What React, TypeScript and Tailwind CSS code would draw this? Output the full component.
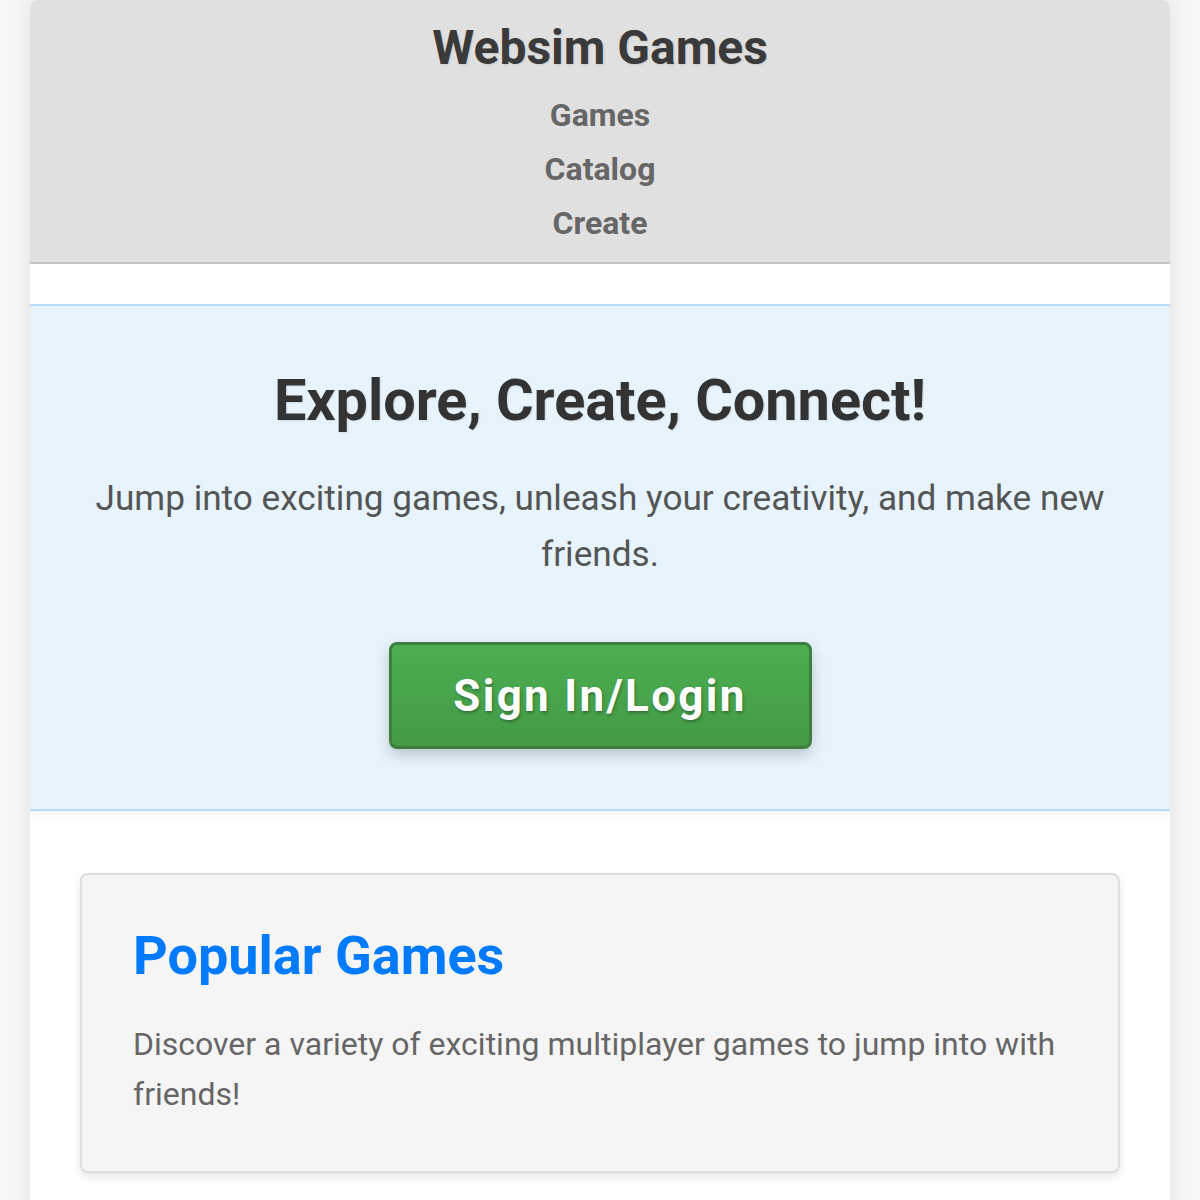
export default function App() {
  const links = ['Games', 'Catalog', 'Create'];

  return (
    <div className="min-h-screen bg-[#f7f7f7] font-['Roboto',sans-serif]">
      <div className="mx-auto w-[1140px] overflow-hidden rounded-t-lg bg-white shadow-[0_0_20px_rgba(0,0,0,0.1)] pb-10">
        <header className="border-b-2 border-[#c4c4c4] bg-[#e0e0e0] pt-[18px] pb-[12px] text-center">
          <h1 className="text-[48px] font-bold leading-[60px] text-[#3a3a3a] [text-shadow:1px_1px_2px_rgba(0,0,0,0.1)]">
            Websim Games
          </h1>
          <nav className="mt-[10px] flex flex-col items-center">
            {links.map((l) => (
              <a key={l} href="#" className="text-[32px] font-bold leading-[54px] text-[#666]">
                {l}
              </a>
            ))}
          </nav>
        </header>

        <section className="mt-10 border-y-2 border-[#b8dcf7] bg-[#e8f4fd] px-16 pt-[60px] pb-[60px] text-center shadow-[0_4px_8px_rgba(0,0,0,0.05)]">
          <h2 className="text-[57.6px] font-bold leading-[70px] text-[#333] [text-shadow:1px_1px_2px_rgba(0,0,0,0.1)]">
            Explore, Create, Connect!
          </h2>
          <p className="mt-[34px] text-[35.2px] leading-[56px] text-[#555]">
            Jump into exciting games, unleash your creativity, and make new friends.
          </p>
          <button className="mt-[60px] h-[107px] w-[423px] rounded-lg border-[3px] border-[#3d7d3f] bg-gradient-to-b from-[#4caf50] to-[#439a47] text-[44px] font-bold tracking-[2.3px] text-white shadow-[0_6px_14px_rgba(0,0,0,0.2)] [text-shadow:1px_2px_3px_rgba(0,0,0,0.3)]">
            Sign In/Login
          </button>
        </section>

        <div className="px-[50px] pt-[62px]">
          <div className="rounded-lg border-2 border-[#dedede] bg-[#f5f5f5] px-[51px] pt-[46px] pb-[52px] shadow-[0_4px_8px_rgba(0,0,0,0.1)]">
            <h3 className="text-[54px] font-bold leading-[70px] text-[#007bff]">Popular Games</h3>
            <p className="mt-[28px] text-[32px] leading-[50px] text-[#666]">
              Discover a variety of exciting multiplayer games to jump into with friends!
            </p>
          </div>
        </div>
      </div>
    </div>
  );
}
